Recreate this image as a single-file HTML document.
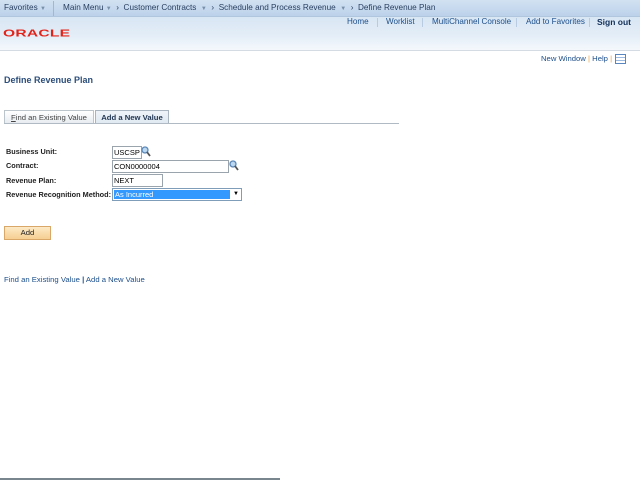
<!DOCTYPE html>
<html><head><style>
body{margin:0;width:640px;height:480px;position:relative;overflow:hidden;background:#fff;font-family:"Liberation Sans",Arial,sans-serif;font-size:7.7px;color:#000}
.a{position:absolute;white-space:nowrap}
#hdr{position:absolute;left:0;top:0;width:640px;height:50px;background:linear-gradient(#c9dcef,#d7e5f3 30%,#e3edf7 70%,#f4f8fc);border-bottom:1px solid #d4dbe3}
#bar{position:absolute;left:0;top:0;width:640px;height:16px;background:linear-gradient(#d2e2f2,#bcd2ea);border-bottom:1px solid #b0c6de}
.n{color:#2a4060;font-size:8.2px}
.l{color:#1d4f8c}
.t{font-size:8.1px}
.sep{position:absolute;width:1px;background:#b9cbe0}
.lab{font-weight:bold;color:#222;font-size:7.3px}
.in{position:absolute;height:11px;border:1px solid #9aa4ad;background:#fff;font-size:7.5px;line-height:11px;padding-left:1px;box-sizing:content-box}
</style></head><body>
<div id="hdr"></div>
<div id="bar"></div>
<div class="a n" style="left:4px;top:3px">Favorites <span style="font-size:6px;color:#7890aa">▼</span></div>
<div class="sep" style="left:53px;top:1px;height:15px;background:#9fb8d4"></div>
<div class="a n" style="left:63px;top:3px">Main Menu <span style="font-size:6px;color:#7890aa">▼</span> &nbsp;› &nbsp;Customer Contracts &nbsp;<span style="font-size:6px;color:#7890aa">▼</span> &nbsp;› &nbsp;Schedule and Process Revenue &nbsp;<span style="font-size:6px;color:#7890aa">▼</span> &nbsp;› &nbsp;Define Revenue Plan</div>
<div class="a l t" style="left:347px;top:17px">Home</div>
<div class="sep" style="left:377px;top:18px;height:9px"></div>
<div class="a l t" style="left:386px;top:17px">Worklist</div>
<div class="sep" style="left:422px;top:18px;height:9px"></div>
<div class="a l t" style="left:432px;top:17px">MultiChannel Console</div>
<div class="sep" style="left:516px;top:18px;height:9px"></div>
<div class="a l t" style="left:526px;top:17px">Add to Favorites</div>
<div class="sep" style="left:589px;top:18px;height:9px"></div>
<div class="a" style="left:597px;top:17px;font-weight:bold;color:#13305a;font-size:8.5px">Sign out</div>
<div class="a" style="left:3px;top:27px;color:#e2231a;font-size:13px;font-weight:bold;letter-spacing:0.2px;transform:scale(1.2,0.8);transform-origin:left top">ORACLE</div>
<div class="a l" style="left:541px;top:54px">New Window <span style="color:#e8a040">|</span> Help <span style="color:#e8a040">|</span></div>
<div class="a" style="left:615px;top:54px;width:9px;height:8px;border:1px solid #5a86c0;background:repeating-linear-gradient(#fff 0 2px,#9dbbe0 2px 3px)"></div>
<div class="a" style="left:4px;top:75px;font-weight:bold;color:#2c4e7a;font-size:9px">Define Revenue Plan</div>
<div class="a" style="left:4px;top:110px;width:88px;height:12px;border:1px solid #bcc4cc;border-bottom:none;background:linear-gradient(#fff,#e8ecf0);color:#444;font-size:7.7px;line-height:13px;text-align:center"><u>F</u>ind an Existing Value</div>
<div class="a" style="left:95px;top:110px;width:72px;height:13px;border:1px solid #a8b4c0;border-bottom:none;background:linear-gradient(#eef3f8,#dfe8f1);color:#1f3350;font-weight:bold;font-size:7.7px;line-height:13px;text-align:center">Add a New Value</div>
<div class="a" style="left:4px;top:123px;width:395px;height:1px;background:#b0bac4"></div>
<div class="a lab" style="left:6px;top:147px">Business Unit:</div>
<div class="a lab" style="left:6px;top:161px">Contract:</div>
<div class="a lab" style="left:6px;top:176px">Revenue Plan:</div>
<div class="a lab" style="left:6px;top:190px">Revenue Recognition Method:</div>
<div class="in" style="left:112px;top:146px;width:27px">USCSP</div>
<div class="in" style="left:112px;top:160px;width:114px">CON0000004</div>
<div class="in" style="left:112px;top:174px;width:48px">NEXT</div>
<div class="in" style="left:112px;top:188px;width:127px;border-color:#7f9db9"><div style="position:absolute;left:1px;top:1px;width:115px;height:9px;background:#3399ff;color:#fff;line-height:9px;padding-left:1px">As Incurred</div><div style="position:absolute;right:2px;top:0;font-size:6px">▼</div></div>
<svg class="a" style="left:141px;top:146px" width="10" height="11"><circle cx="4" cy="4" r="3" fill="#bcd8f0" stroke="#5b88b8" stroke-width="1.3"/><line x1="6" y1="6" x2="9" y2="10" stroke="#555" stroke-width="1.8"/></svg>
<svg class="a" style="left:229px;top:160px" width="10" height="11"><circle cx="4" cy="4" r="3" fill="#bcd8f0" stroke="#5b88b8" stroke-width="1.3"/><line x1="6" y1="6" x2="9" y2="10" stroke="#555" stroke-width="1.8"/></svg>
<div class="a" style="left:4px;top:226px;width:45px;height:12px;border:1px solid #d9a868;background:linear-gradient(#fde9c6,#f6cf92);font-size:7.7px;line-height:12px;text-align:center;color:#222">Add</div>
<div class="a l" style="left:4px;top:275px">Find an Existing Value <span style="color:#1d4f8c;font-weight:bold">|</span> Add a New Value</div>
<div class="a" style="left:0;top:478px;width:280px;height:2px;background:#7a868e"></div>
</body></html>
